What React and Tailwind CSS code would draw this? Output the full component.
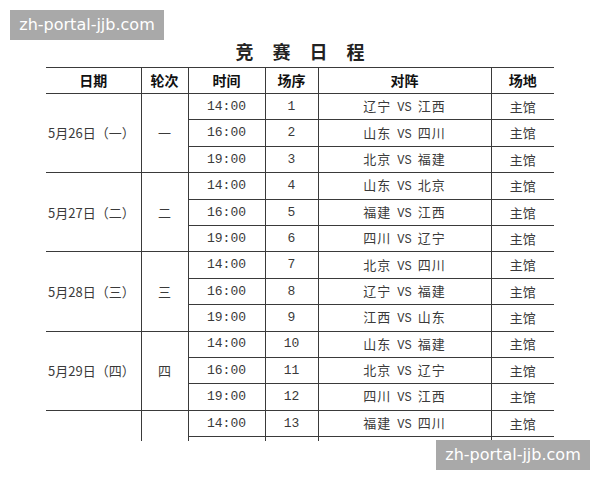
import React from "react";

const groups = [
  {
    date: "5月26日（一）",
    round: "一",
    games: [
      ["14:00", "1", "辽宁", "江西"],
      ["16:00", "2", "山东", "四川"],
      ["19:00", "3", "北京", "福建"],
    ],
  },
  {
    date: "5月27日（二）",
    round: "二",
    games: [
      ["14:00", "4", "山东", "北京"],
      ["16:00", "5", "福建", "江西"],
      ["19:00", "6", "四川", "辽宁"],
    ],
  },
  {
    date: "5月28日（三）",
    round: "三",
    games: [
      ["14:00", "7", "北京", "四川"],
      ["16:00", "8", "辽宁", "福建"],
      ["19:00", "9", "江西", "山东"],
    ],
  },
  {
    date: "5月29日（四）",
    round: "四",
    games: [
      ["14:00", "10", "山东", "福建"],
      ["16:00", "11", "北京", "辽宁"],
      ["19:00", "12", "四川", "江西"],
    ],
  },
  {
    // the photo is cut off here: only the first game of this day shows
    date: "",
    round: "",
    games: [["14:00", "13", "福建", "四川"], null, null],
  },
];

const cjk = "font-['Noto_Sans_CJK_SC',sans-serif]";
const mono = "font-['Liberation_Mono','Noto_Sans_CJK_SC',monospace]";
const line = "border-[#3a3a3a]";

function Watermark({ className }) {
  return (
    <div
      className={`absolute h-[30px] w-[154px] bg-[#a9a9a9] text-white text-[16px] leading-[30px] text-center font-['DejaVu_Sans',sans-serif] ${className}`}
    >
      zh-portal-jjb.com
    </div>
  );
}

export default function App() {
  return (
    <div className={`relative w-[600px] h-[480px] bg-white overflow-hidden ${cjk}`}>
      {/* Title */}
      <div className="pt-[38px] h-[67px]">
        <div className="text-center text-[18px] leading-[26px] font-semibold text-[#222] tracking-[19px] pl-[19px]">
          竞赛日程
        </div>
      </div>

      {/* Schedule table, cropped at the bottom */}
      <div className="ml-[46px] w-[508px] h-[374px] overflow-hidden">
        <table className="w-[508px] border-collapse table-fixed text-center">
          <colgroup>
            <col className="w-[95px]" />
            <col className="w-[47px]" />
            <col className="w-[77px]" />
            <col className="w-[53px]" />
            <col className="w-[173px]" />
            <col className="w-[63px]" />
          </colgroup>
          <thead>
            <tr className={`h-[26px] border-t border-b ${line} text-[14px] font-bold text-[#111]`}>
              <th className={`border-r ${line}`}>日期</th>
              <th className={`border-r ${line}`}>轮次</th>
              <th className={`border-r ${line}`}>时间</th>
              <th className={`border-r ${line}`}>场序</th>
              <th className={`border-r ${line}`}>对阵</th>
              <th>场地</th>
            </tr>
          </thead>
          <tbody className="text-[13px] text-[#3a3a3a]">
            {groups.map((g, gi) =>
              g.games.map((game, i) => (
                <tr key={`${gi}-${i}`} className={`h-[26.4px] border-b ${line}`}>
                  {i === 0 && (
                    <>
                      <td rowSpan={3} className={`border-r ${line} text-left pl-[2px]`}>
                        {g.date}
                      </td>
                      <td rowSpan={3} className={`border-r ${line}`}>
                        {g.round}
                      </td>
                    </>
                  )}
                  <td className={`border-r ${line} ${mono}`}>{game && game[0]}</td>
                  <td className={`border-r ${line} ${mono}`}>{game && game[1]}</td>
                  <td className={`border-r ${line} tracking-[1px]`}>
                    {game && (
                      <>
                        {game[2]}
                        <span className={`${mono} text-[12px] mx-[6px] tracking-normal`}>VS</span>
                        {game[3]}
                      </>
                    )}
                  </td>
                  <td>{game && "主馆"}</td>
                </tr>
              ))
            )}
          </tbody>
        </table>
      </div>

      <Watermark className="left-[10px] top-[10px]" />
      <Watermark className="left-[436px] top-[440px]" />
    </div>
  );
}
